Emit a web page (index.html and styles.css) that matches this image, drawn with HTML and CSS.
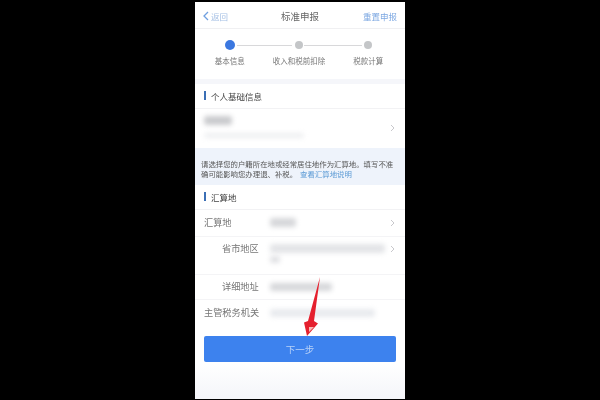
FILE: index.html
```html
<!doctype html>
<html>
	<head>
		<meta charset="utf-8"/>
		<link rel="stylesheet" href="styles.css">
	</head>
	<body>
		<div class="phone">
			<div class="nav">
				<div class="nav-back">
					<svg class="nav-chevron" width="6" height="10" viewBox="0 0 6 10"><path d="M5 1 1 5l4 4" fill="none" stroke="#6f9fe0" stroke-width="1.3"/></svg>
					<span>返回</span>
				</div>
				<div class="nav-title">标准申报</div>
				<div class="nav-reset">重置申报</div>
			</div>

			<div class="steps">
				<div class="step">
					<div class="dot dot-on"></div>
					<div class="step-label">基本信息</div>
				</div>
				<div class="step step-mid">
					<div class="dot"></div>
					<div class="step-label">收入和税前扣除</div>
				</div>
				<div class="step">
					<div class="dot"></div>
					<div class="step-label">税款计算</div>
				</div>
			</div>

			<div class="section section-top"><span class="tick"></span>个人基础信息</div>
			<div class="person">
				<div class="person-text">
					<div class="smudge smudge-name"></div>
					<div class="smudge smudge-id"></div>
				</div>
				<svg class="chevron" width="5" height="8" viewBox="0 0 5 8"><path d="M1 1l3 3-3 3" fill="none" stroke="#c8c8cc"/></svg>
			</div>

			<div class="notice">
				<div class="notice-line">请选择您的户籍所在地或经常居住地作为汇算地。填写不准</div>
				<div class="notice-line">
					<span>确可能影响您办理退、补税。</span>
					<span class="notice-link">查看汇算地说明</span>
				</div>
			</div>

			<div class="section"><span class="tick"></span>汇算地</div>
			<div class="row row-a">
				<div class="row-label">汇算地</div>
				<div class="smudge smudge-city"></div>
				<svg class="chevron" width="5" height="8" viewBox="0 0 5 8"><path d="M1 1l3 3-3 3" fill="none" stroke="#c8c8cc"/></svg>
			</div>
			<div class="row row-b">
				<div class="row-label row-label-sub">省市地区</div>
				<div class="smudge-stack">
					<div class="smudge smudge-long"></div>
					<div class="smudge smudge-tail"></div>
				</div>
				<svg class="chevron chevron-top" width="5" height="8" viewBox="0 0 5 8"><path d="M1 1l3 3-3 3" fill="none" stroke="#c8c8cc"/></svg>
			</div>
			<div class="row row-c">
				<div class="row-label row-label-sub">详细地址</div>
				<div class="smudge smudge-addr"></div>
			</div>
			<div class="row row-d">
				<div class="row-label">主管税务机关</div>
				<div class="smudge smudge-office"></div>
			</div>

			<div class="footer">
				<div class="next">下一步</div>
			</div>

			<svg class="arrow" width="20" height="62" viewBox="0 0 20 62">
				<path d="M19 0 13 44l4 2.500L6 59 3 45.500l4-1.500z" fill="#e5202e"/>
				<path d="M8 50h5l-5 5z" fill="#f6b9b4"/>
			</svg>
		</div>
	</body>
</html>
```

FILE: styles.css
```css
* {
	box-sizing: border-box;
}

html, body {
	height: 100%;
}

body {
	margin: 0;
	background-color: #000;
	display: flex;
	justify-content: center;
	align-items: center;
	font-family: "Noto Sans CJK SC", "Liberation Sans", sans-serif;
	color: #444;
}

.phone {
	position: relative;
	width: 210px;
	height: 397px;
	background-color: #f5f6fa;
	display: flex;
	flex-direction: column;
	overflow: hidden;
	filter: blur(0.7px);
}

.nav {
	height: 27px;
	padding: 2px 8px 0;
	background-color: #fff;
	border-bottom: 1px solid #f0f0f2;
	display: grid;
	grid-template-columns: 1fr auto 1fr;
	align-items: center;
	font-size: 8.500px;
}

.nav-back {
	display: flex;
	align-items: center;
	gap: 2px;
	color: #a4bfe4;
}

.nav-title {
	font-size: 9.500px;
	color: #666;
}

.nav-reset {
	color: #7da8e2;
	text-align: right;
}

.steps {
	height: 50px;
	background-color: #fff;
	display: grid;
	grid-template-columns: repeat(3, 1fr);
	padding: 12.500px 2px 0 0;
}

.step {
	display: flex;
	flex-direction: column;
	align-items: center;
	gap: 5.500px;
	position: relative;
}

.dot {
	width: 8px;
	height: 8px;
	border-radius: 50%;
	background-color: #c4c6c8;
}

.dot-on {
	width: 10px;
	height: 10px;
	margin: -1px 0;
	background-color: #3b78e0;
}

.step-mid .dot::before,
.step-mid .dot::after {
	content: "";
	position: absolute;
	top: 3.500px;
	height: 1px;
	background-color: #d8d8da;
}

.step-mid .dot::before {
	right: calc(50% + 7px);
	width: 55px;
}

.step-mid .dot::after {
	left: calc(50% + 5px);
	width: 58px;
}

.step-label {
	font-size: 7.500px;
	line-height: 11px;
	color: #777;
	white-space: nowrap;
}

.section {
	height: 25px;
	background-color: #fff;
	padding-left: 9px;
	display: flex;
	align-items: center;
	gap: 5px;
	font-size: 8.500px;
	color: #444;
	border-bottom: 1px solid #f2f2f4;
}

.section-top {
	margin-top: 5px;
}

.tick {
	width: 2px;
	height: 9px;
	background-color: #3b6fb5;
}

.person {
	height: 39px;
	background-color: #fff;
	padding: 0 10px 0 9px;
	display: flex;
	align-items: center;
	justify-content: space-between;
}

.person-text {
	display: flex;
	flex-direction: column;
	gap: 8px;
	padding-bottom: 2px;
}

.smudge {
	background-color: #dcdde0;
	border-radius: 3px;
	filter: blur(2.5px);
}

.smudge-name {
	width: 28px;
	height: 9px;
	background-color: #c9cacd;
}

.smudge-id {
	width: 100px;
	height: 5px;
	background-color: #eeeff1;
}

.notice {
	height: 37px;
	padding: 11px 6px 0;
	background-color: #eef3fb;
	font-size: 7.400px;
	line-height: 10px;
	color: #555;
}

.notice-line {
	display: flex;
	gap: 3px;
	white-space: nowrap;
}

.notice-link {
	color: #5b9ad5;
}

.row {
	background-color: #fff;
	padding: 0 10px 0 9px;
	display: flex;
	align-items: center;
	font-size: 9.200px;
	line-height: 13px;
	color: #777;
	border-bottom: 1px solid #f4f4f6;
}

.row-a {
	height: 27px;
}

.row-b {
	height: 38px;
	align-items: flex-start;
	padding-top: 5px;
}

.row-c {
	height: 25px;
}

.row-d {
	height: 28px;
	border-bottom: none;
	padding-bottom: 2px;
}

.row-label {
	width: 66px;
	flex-shrink: 0;
	white-space: nowrap;
}

.row-label-sub {
	padding-left: 18px;
}

.smudge-city {
	width: 26px;
	height: 9px;
	background-color: #d6d7da;
}

.smudge-stack {
	flex: 1;
	display: flex;
	flex-direction: column;
	gap: 3px;
	padding-top: 2px;
}

.smudge-long {
	width: 115px;
	height: 9px;
	background-color: #e3e4e7;
}

.smudge-tail {
	width: 10px;
	height: 7px;
	background-color: #dfe0e3;
}

.smudge-addr {
	width: 62px;
	height: 8px;
	background-color: #d6d7da;
}

.smudge-office {
	width: 105px;
	height: 8px;
	background-color: #e8eaee;
}

.chevron {
	margin-left: auto;
	flex-shrink: 0;
}

.chevron-top {
	margin-top: 3px;
}

.footer {
	flex: 1;
	padding: 8px 9px 0;
	background-image: linear-gradient(#fff 36px, #f5f6fa 68px);
}

.next {
	height: 26px;
	border-radius: 2px;
	background-color: #3d82ee;
	color: #b9d2f8;
	font-size: 9.500px;
	display: flex;
	align-items: center;
	justify-content: center;
}

.arrow {
	position: absolute;
	left: 106px;
	top: 275px;
}
```
